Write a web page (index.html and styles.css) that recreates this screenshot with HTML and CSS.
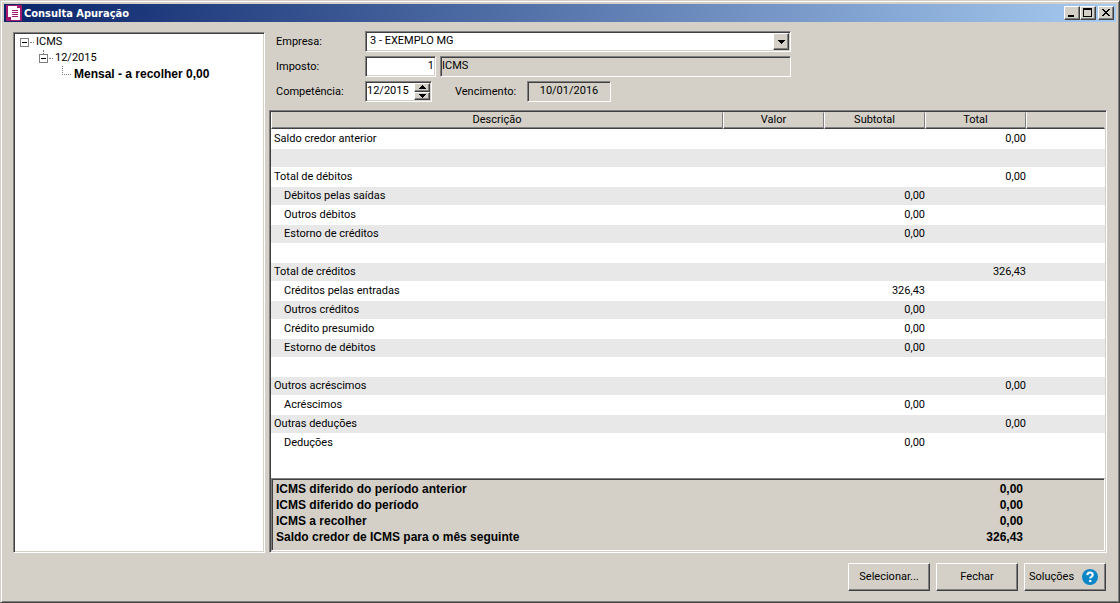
FILE: index.html
```html
<!DOCTYPE html>
<html lang="pt-BR">
<head>
<meta charset="utf-8">
<title>Consulta Apuração</title>
<link rel="stylesheet" href="styles.css">
</head>
<body>
<div class="window">
  <header class="titlebar">
    <svg class="app-icon" width="16" height="16" viewBox="0 0 16 16" shape-rendering="crispEdges" aria-hidden="true">
      <rect width="16" height="16" fill="#a3176e"/>
      <path d="M2 1h9v2h3v12H5v-3H2z" fill="#fff"/>
      <path d="M6 5h6v1H6zM6 7h6v1H6zM6 9h6v1H6zM6 11h6v1H6z" fill="#a3176e"/>
    </svg>
    <h1 class="title">Consulta Apuração</h1>
    <div class="window-buttons">
      <button class="window-button" type="button" aria-label="Minimizar"><svg width="12" height="10" shape-rendering="crispEdges"><path d="M2 7h6v2H2z"/></svg></button>
      <button class="window-button" type="button" aria-label="Maximizar"><svg width="12" height="10" shape-rendering="crispEdges"><path d="M1 0h9v9H1zM2 2v6h7V2z" fill-rule="evenodd"/></svg></button>
      <button class="window-button window-button-close" type="button" aria-label="Fechar janela"><svg width="12" height="10" shape-rendering="crispEdges"><path d="M2 1h2v1h1v1h2V2h1V1h2v1H9v1H8v1H7v1h1v1h1v1h1v1H8V7H7V6H5v1H4v1H2V7h1V6h1V5h1V4H4V3H3V2H2z"/></svg></button>
    </div>
  </header>

  <div class="workspace">
    <nav class="tree" aria-label="Apurações">
      <ul class="tree-list">
        <li>
          <div class="tree-node"><button class="toggle" type="button" aria-label="Recolher ICMS"></button><span class="twig"></span><span>ICMS</span></div>
          <ul class="tree-list tree-child">
            <li>
              <div class="tree-node"><button class="toggle toggle-linked" type="button" aria-label="Recolher 12/2015"></button><span class="twig"></span><span>12/2015</span></div>
              <ul class="tree-list tree-leaf">
                <li class="tree-node"><span class="elbow"></span><strong>Mensal - a recolher 0,00</strong></li>
              </ul>
            </li>
          </ul>
        </li>
      </ul>
    </nav>

    <main class="content">
      <form class="filters">
        <label for="empresa">Empresa:</label>
        <div class="combo sunken">
          <select id="empresa"><option>3 - EXEMPLO MG</option></select>
          <span class="combo-arrow" aria-hidden="true"><svg width="7" height="4" shape-rendering="crispEdges"><path d="M0 0h7v1H6v1H5v1H4v1H3V3H2V2H1V1H0z"/></svg></span>
        </div>

        <label for="imposto">Imposto:</label>
        <div class="field-row">
          <input class="field sunken tax-code" id="imposto" value="1">
          <input class="field sunken-flat tax-name" value="ICMS" aria-label="Nome do imposto" readonly>
        </div>

        <label for="competencia">Competência:</label>
        <div class="field-row">
          <div class="spinner sunken">
            <input id="competencia" value="12/2015">
            <div class="spin-buttons">
              <button type="button" aria-label="Próxima"><svg width="7" height="4" shape-rendering="crispEdges"><path d="M3 0h1v1h1v1h1v1h1v1H0V3h1V2h1V1h1z"/></svg></button>
              <button type="button" aria-label="Anterior"><svg width="7" height="4" shape-rendering="crispEdges"><path d="M0 0h7v1H6v1H5v1H4v1H3V3H2V2H1V1H0z"/></svg></button>
            </div>
          </div>
          <label class="due-label" for="vencimento">Vencimento:</label>
          <input class="field sunken-flat due-date" id="vencimento" value="10/01/2016" readonly>
        </div>
      </form>

      <section class="report sunken">
        <table class="grid">
          <colgroup><col><col class="col-value"><col class="col-value"><col class="col-value"><col class="col-rest"></colgroup>
          <thead><tr><th>Descrição</th><th>Valor</th><th>Subtotal</th><th>Total</th><th></th></tr></thead>
          <tbody>
            <tr><td>Saldo credor anterior</td><td></td><td></td><td>0,00</td><td></td></tr>
            <tr><td></td><td></td><td></td><td></td><td></td></tr>
            <tr><td>Total de débitos</td><td></td><td></td><td>0,00</td><td></td></tr>
            <tr class="sub"><td>Débitos pelas saídas</td><td></td><td>0,00</td><td></td><td></td></tr>
            <tr class="sub"><td>Outros débitos</td><td></td><td>0,00</td><td></td><td></td></tr>
            <tr class="sub"><td>Estorno de créditos</td><td></td><td>0,00</td><td></td><td></td></tr>
            <tr><td></td><td></td><td></td><td></td><td></td></tr>
            <tr><td>Total de créditos</td><td></td><td></td><td>326,43</td><td></td></tr>
            <tr class="sub"><td>Créditos pelas entradas</td><td></td><td>326,43</td><td></td><td></td></tr>
            <tr class="sub"><td>Outros créditos</td><td></td><td>0,00</td><td></td><td></td></tr>
            <tr class="sub"><td>Crédito presumido</td><td></td><td>0,00</td><td></td><td></td></tr>
            <tr class="sub"><td>Estorno de débitos</td><td></td><td>0,00</td><td></td><td></td></tr>
            <tr><td></td><td></td><td></td><td></td><td></td></tr>
            <tr><td>Outros acréscimos</td><td></td><td></td><td>0,00</td><td></td></tr>
            <tr class="sub"><td>Acréscimos</td><td></td><td>0,00</td><td></td><td></td></tr>
            <tr><td>Outras deduções</td><td></td><td></td><td>0,00</td><td></td></tr>
            <tr class="sub"><td>Deduções</td><td></td><td>0,00</td><td></td><td></td></tr>
          </tbody>
        </table>
        <dl class="summary">
          <div><dt>ICMS diferido do período anterior</dt><dd>0,00</dd></div>
          <div><dt>ICMS diferido do período</dt><dd>0,00</dd></div>
          <div><dt>ICMS a recolher</dt><dd>0,00</dd></div>
          <div><dt>Saldo credor de ICMS para o mês seguinte</dt><dd>326,43</dd></div>
        </dl>
      </section>
    </main>
  </div>

  <footer class="actions">
    <button class="action" type="button">Selecionar...</button>
    <button class="action" type="button">Fechar</button>
    <button class="action action-help" type="button">Soluções
      <svg width="16" height="16" viewBox="0 0 16 16" aria-hidden="true"><circle cx="8" cy="8" r="8" fill="#0c86c6"/><path d="M5.3 6.1C5.4 2.7 10.8 2.8 10.8 5.8 10.8 7.7 8.2 7.6 8.2 9.6" fill="none" stroke="#fff" stroke-width="2"/><path d="M7.1 11h2.2v2H7.1z" fill="#fff"/></svg>
    </button>
  </footer>
</div>
</body>
</html>
```
FILE: styles.css
```css
:root {
  --face: #d4d0c8;
  --shadow: #808080;
  --dark: #404040;
  --ui: Roboto, "Liberation Sans", sans-serif;
  --ui-bold: "Liberation Sans", Arial, sans-serif;
}

* { box-sizing: border-box; }

body {
  margin: 0;
  background: var(--face);
  color: #000;
  font: 11px/16px var(--ui);
}

button, input, select {
  margin: 0;
  padding: 0;
  border: 0;
  border-radius: 0;
  background: none;
  color: inherit;
  font: inherit;
}

ul, dl, dd, h1 { margin: 0; padding: 0; }

svg { display: block; flex: none; }

.window {
  display: flex;
  flex-direction: column;
  min-height: 100vh;
  padding: 2px;
  border: 1px solid;
  border-color: var(--face) var(--dark) var(--dark) var(--face);
  box-shadow: inset 1px 1px #fff, inset -1px -1px var(--shadow);
}

.titlebar {
  display: flex;
  align-items: center;
  gap: 2px;
  height: 18px;
  margin: 1px;
  padding: 0 2px;
  background: linear-gradient(to right, #0a246a, #a6caf0);
  color: #fff;
}

.title {
  flex: 1;
  padding-top: 1px;
  font: bold 11px/16px "DejaVu Sans Condensed", "Noto Sans", sans-serif;
}

.window-buttons { display: flex; }

.window-button,
.spin-buttons button,
.combo-arrow {
  display: flex;
  align-items: center;
  justify-content: center;
  background: var(--face);
  border: 1px solid;
  border-color: #fff var(--dark) var(--dark) #fff;
  box-shadow: inset -1px -1px var(--shadow);
}

.window-button { width: 16px; height: 14px; }
.window-button-close { margin-left: 2px; }

.sunken {
  border: 1px solid;
  border-color: var(--shadow) #fff #fff var(--shadow);
  box-shadow: inset 1px 1px var(--dark), inset -1px -1px var(--face);
}

.sunken-flat {
  border: 1px solid;
  border-color: var(--shadow) #fff #fff var(--shadow);
  box-shadow: inset 1px 1px var(--dark);
}

.workspace {
  flex: 1;
  display: flex;
  gap: 4px;
  padding: 8px 10px 0;
}

.tree {
  flex: none;
  width: 252px;
  margin-top: 1px;
  padding: 1px 6px;
  background: #fff;
  border: 1px solid;
  border-color: var(--shadow) #fff #fff var(--shadow);
  box-shadow: inset 1px 1px var(--dark), inset -1px -1px var(--face);
}

.tree-list { list-style: none; }
.tree-child { padding-left: 19px; }
.tree-leaf { padding-left: 23px; }
.tree-node { display: flex; align-items: center; height: 16px; }
.tree-node strong { margin-left: 3px; font: bold 12px/16px var(--ui-bold); }

.toggle {
  position: relative;
  width: 9px;
  height: 9px;
  border: 1px solid var(--shadow);
  background: linear-gradient(#000, #000) center / 5px 1px no-repeat;
}

.toggle-linked::before {
  content: "";
  position: absolute;
  left: 3px;
  bottom: 8px;
  height: 4px;
  border-left: 1px dotted var(--shadow);
}

.twig {
  width: 4px;
  margin: 0 2px 0 1px;
  border-top: 1px dotted var(--shadow);
}

.elbow {
  align-self: flex-start;
  width: 9px;
  height: 9px;
  border: dotted var(--shadow);
  border-width: 0 0 1px 1px;
}

.content {
  flex: 1;
  display: flex;
  flex-direction: column;
  gap: 8px;
  min-width: 0;
}

.filters {
  display: grid;
  grid-template-columns: 89px minmax(0, 426px);
  row-gap: 4px;
  align-items: center;
  padding-left: 7px;
}

.filters label { padding-top: 1px; }

.combo { position: relative; height: 21px; background: #fff; padding: 1px; }

.combo select {
  appearance: none;
  width: 100%;
  height: 16px;
  padding-left: 3px;
}

.combo-arrow {
  position: absolute;
  top: 1px;
  right: 1px;
  bottom: 1px;
  width: 16px;
  pointer-events: none;
}

.field-row { display: flex; align-items: center; }
.field { height: 21px; padding: 0 1px 3px; }
.tax-code { width: 71px; margin-right: 4px; background: #fff; text-align: right; }
.tax-name { flex: 1; min-width: 0; }

.spinner { display: flex; width: 67px; height: 21px; padding: 1px; background: #fff; }
.spinner input { flex: 1; min-width: 0; height: 16px; }
.spin-buttons { display: flex; flex-direction: column; width: 16px; }
.spin-buttons button { flex: 1; min-height: 0; }
.due-label { width: 72px; margin-left: 23px; }
.due-date { width: 84px; text-align: center; }

.report {
  flex: 1;
  display: flex;
  flex-direction: column;
  padding: 1px;
  background: #fff;
}

.grid {
  width: 100%;
  table-layout: fixed;
  border-collapse: separate;
  border-spacing: 0;
}

.col-value { width: 101px; }
.col-rest { width: 79px; }

.grid th {
  height: 17px;
  padding: 0 0 2px;
  background: var(--face);
  border: 1px solid;
  border-color: var(--face) var(--shadow) var(--dark) #fff;
  box-shadow: inset 0 -1px var(--shadow);
  font-weight: normal;
  line-height: 13px;
}

.grid th:last-child { border-right-color: var(--face); }

.grid td {
  height: 19px;
  padding: 0 0 1px;
  border-top: 1px solid #fff;
  line-height: 17px;
  text-align: right;
}

.grid td:first-child { padding-left: 3px; text-align: left; }
.grid .sub td:first-child { padding-left: 13px; }
.grid tbody tr:nth-child(even) td { background: #e8e8e8; background-clip: padding-box; }

.summary {
  margin-top: auto;
  padding: 2px 81px 5px 4px;
  background: var(--face);
  border: 1px solid;
  border-color: var(--shadow) #fff #fff var(--shadow);
  box-shadow: inset 1px 1px var(--dark);
  font: bold 12px/16px var(--ui-bold);
}

.summary div { display: flex; justify-content: space-between; }

.actions {
  display: flex;
  justify-content: flex-end;
  gap: 6px;
  padding: 10px 11px 9px;
}

.action {
  display: flex;
  align-items: center;
  justify-content: center;
  width: 82px;
  height: 28px;
  border: 1px solid;
  border-color: #fff var(--dark) var(--dark) #fff;
  box-shadow: inset -1px -1px var(--shadow);
}

.action-help { justify-content: space-between; padding: 0 7px 0 4px; }
```
